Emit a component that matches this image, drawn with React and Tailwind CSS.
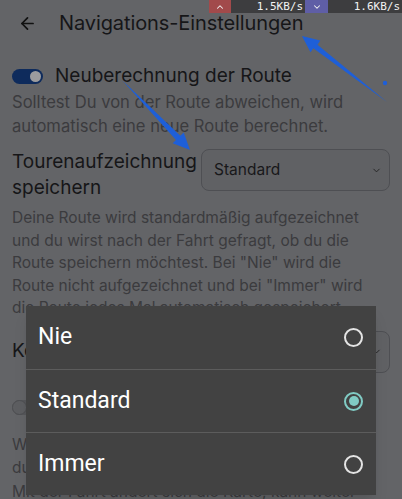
import React from "react";
import { ArrowLeft, ChevronDown, ChevronUp } from "lucide-react";

const options = ["Nie", "Standard", "Immer"];

const NetSpeed = () => (
  <div className="absolute top-0 right-0 flex h-[13px] text-[11px] leading-[13px] text-[#f2f2f2] font-['DejaVu_Sans_Mono',monospace]">
    <div className="w-[22px] bg-[#a24a4b] flex items-center justify-center">
      <ChevronUp size={10} strokeWidth={2.5} />
    </div>
    <div className="w-[74px] bg-[#3d3d3f] text-right pr-[2px]">1.5KB/s</div>
    <div className="w-[23px] bg-[#5f5ea6] flex items-center justify-center">
      <ChevronDown size={10} strokeWidth={2.5} />
    </div>
    <div className="w-[74px] bg-[#3d3d3f] text-right pr-[2px]">1.6KB/s</div>
  </div>
);

const Select = ({ value }) => (
  <div className="w-[189px] h-[42px] shrink-0 flex items-center justify-between pl-3 pr-[7px] rounded-lg border border-[#4e4f53] bg-[#606164] text-[15.5px] text-[#18181a]">
    <span>{value}</span>
    <ChevronDown size={11} strokeWidth={2} className="text-[#222]" />
  </div>
);

const Radio = ({ checked }) => (
  <span
    className={`w-[19px] h-[19px] rounded-full border-2 flex items-center justify-center ${
      checked ? "border-[#80cbc4]" : "border-[#e4e4e4]"
    }`}
  >
    {checked && <span className="w-[10px] h-[10px] rounded-full bg-[#80cbc4]" />}
  </span>
);

const Annotations = () => (
  <svg
    className="absolute inset-0 pointer-events-none"
    width="402"
    height="499"
    viewBox="0 0 402 499"
  >
    <polygon
      fill="#1e5fd8"
      points="302,36 320.3,40.5 317.5,44.8 387,102 313.3,48.2 310.5,52.3"
    />
    <polygon
      fill="#1e5fd8"
      points="190,150 172.7,143.2 176,140 122,80 180.3,135.8 183.7,132.4"
    />
    <circle cx="385" cy="83" r="2.2" fill="#1e5fd8" />
  </svg>
);

export default function App() {
  return (
    <div className="relative w-[402px] h-[499px] overflow-hidden bg-[#636467] font-['Inter',sans-serif]">
      <NetSpeed />

      {/* header */}
      <div className="h-[46px] flex items-center pl-[18px]">
        <ArrowLeft size={19} strokeWidth={2.2} className="text-[#111]" />
        <h1 className="ml-[22px] text-[20px] text-[#161618] tracking-[-0.1px]">
          Navigations-Einstellungen
        </h1>
      </div>

      <div className="px-3">
        {/* route recalculation */}
        <div className="mt-[17px] flex items-center h-[26px]">
          <div className="w-[31px] h-[15px] rounded-full bg-[#0e2b5c] flex items-center justify-end pr-[2px]">
            <span className="w-[11px] h-[11px] rounded-full bg-[#9c9c9e]" />
          </div>
          <span className="ml-3 text-[19px] text-[#161618]">Neuberechnung der Route</span>
        </div>
        <p className="mt-px text-[16.6px] leading-[24px] text-[#3b3b3e]">
          <span className="block">Solltest Du von der Route abweichen, wird</span>
          <span className="block">automatisch eine neue Route berechnet.</span>
        </p>

        {/* tour recording */}
        <div className="mt-[11px] flex items-start justify-between">
          <span className="text-[19px] leading-[26px] text-[#161618]">
            <span className="block">Tourenaufzeichnung</span>
            <span className="block">speichern</span>
          </span>
          <Select value="Standard" />
        </div>
        <p className="mt-[6px] text-[15.5px] leading-[22.5px] text-[#3b3b3e]">
          <span className="block">Deine Route wird standardmäßig aufgezeichnet</span>
          <span className="block">und du wirst nach der Fahrt gefragt, ob du die</span>
          <span className="block">Route speichern möchtest. Bei "Nie" wird die</span>
          <span className="block">Route nicht aufgezeichnet und bei "Immer" wird</span>
          <span className="block">die Route jedes Mal automatisch gespeichert.</span>
        </p>

        {/* map orientation */}
        <div className="mt-[11px] flex items-center justify-between">
          <span className="text-[19px] text-[#161618]">Kompass</span>
          <Select value="Norden" />
        </div>

        <div className="mt-[22px] flex items-center h-[26px]">
          <div className="w-[31px] h-[15px] rounded-full bg-[#56575a] flex items-center">
            <span className="w-[15px] h-[15px] rounded-full bg-[#5d5e61] border border-[#4d4e51]" />
          </div>
          <span className="ml-3 text-[19px] text-[#161618]">Auto-Zoom</span>
        </div>
        <p className="mt-[12px] text-[15.5px] leading-[23.5px] text-[#3b3b3e]">
          <span className="block">Wenn aktiviert, passt sich der Zoom automatisch</span>
          <span className="block">durch deine Geschwindigkeit an. Je schneller, n.</span>
          <span className="block">Mit der Fahrt ändert sich die Karte, kann weiter</span>
        </p>
      </div>

      {/* option dialog */}
      <div className="absolute left-[26px] top-[306px] w-[350px] bg-[#424242] font-['Roboto',sans-serif] text-white shadow-lg">
        {options.map((opt, i) => (
          <div
            key={opt}
            className={`h-[63px] flex items-center justify-between pl-3 pr-[13px] ${
              i > 0 ? "border-t border-[#5c5c5c]" : ""
            }`}
          >
            <span className="text-[23px]">{opt}</span>
            <Radio checked={opt === "Standard"} />
          </div>
        ))}
      </div>

      <Annotations />
    </div>
  );
}
